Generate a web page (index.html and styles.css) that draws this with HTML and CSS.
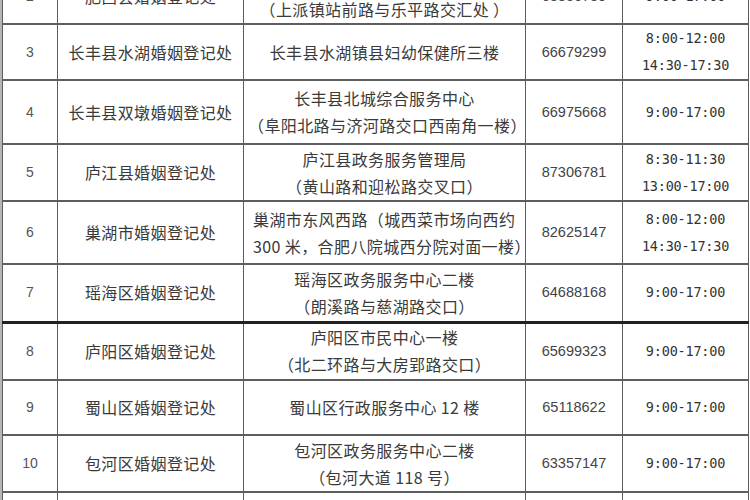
FILE: index.html
```html
<!DOCTYPE html>
<html lang="zh-CN">
<head>
<meta charset="utf-8">
<title>合肥市婚姻登记处</title>
<link rel="stylesheet" href="styles.css">
</head>
<body>
<div class="sheet">
<table class="reg">
  <colgroup>
    <col class="c-no"><col class="c-name"><col class="c-addr"><col class="c-tel"><col class="c-time">
  </colgroup>
  <tbody>
    <tr class="r2">
      <td class="no">2</td>
      <td class="name">肥西县婚姻登记处</td>
      <td class="addr">肥西县政务服务中心<br>（上派镇站前路与乐平路交汇处 ）</td>
      <td class="tel">68856789</td>
      <td class="time">9:00-17:00</td>
    </tr>
    <tr class="r3">
      <td class="no">3</td>
      <td class="name">长丰县水湖婚姻登记处</td>
      <td class="addr">长丰县水湖镇县妇幼保健所三楼</td>
      <td class="tel">66679299</td>
      <td class="time">8:00-12:00<br>14:30-17:30</td>
    </tr>
    <tr class="r4">
      <td class="no">4</td>
      <td class="name">长丰县双墩婚姻登记处</td>
      <td class="addr">长丰县北城综合服务中心<br>（阜阳北路与济河路交口西南角一楼）</td>
      <td class="tel">66975668</td>
      <td class="time">9:00-17:00</td>
    </tr>
    <tr class="r5">
      <td class="no">5</td>
      <td class="name">庐江县婚姻登记处</td>
      <td class="addr">庐江县政务服务管理局<br>（黄山路和迎松路交叉口）</td>
      <td class="tel">87306781</td>
      <td class="time">8:30-11:30<br>13:00-17:00</td>
    </tr>
    <tr class="r6">
      <td class="no">6</td>
      <td class="name">巢湖市婚姻登记处</td>
      <td class="addr left">巢湖市东风西路（城西菜市场向西约<br>300 米，合肥八院城西分院对面一楼）</td>
      <td class="tel">82625147</td>
      <td class="time">8:00-12:00<br>14:30-17:30</td>
    </tr>
    <tr class="r7">
      <td class="no">7</td>
      <td class="name">瑶海区婚姻登记处</td>
      <td class="addr">瑶海区政务服务中心二楼<br>（朗溪路与慈湖路交口）</td>
      <td class="tel">64688168</td>
      <td class="time">9:00-17:00</td>
    </tr>
    <tr class="r8">
      <td class="no">8</td>
      <td class="name">庐阳区婚姻登记处</td>
      <td class="addr">庐阳区市民中心一楼<br>（北二环路与大房郢路交口）</td>
      <td class="tel">65699323</td>
      <td class="time">9:00-17:00</td>
    </tr>
    <tr class="r9">
      <td class="no">9</td>
      <td class="name">蜀山区婚姻登记处</td>
      <td class="addr">蜀山区行政服务中心 12 楼</td>
      <td class="tel">65118622</td>
      <td class="time">9:00-17:00</td>
    </tr>
    <tr class="r10">
      <td class="no">10</td>
      <td class="name">包河区婚姻登记处</td>
      <td class="addr">包河区政务服务中心二楼<br>（包河大道 118 号）</td>
      <td class="tel">63357147</td>
      <td class="time">9:00-17:00</td>
    </tr>
    <tr class="r11">
      <td></td><td></td><td></td><td></td><td></td>
    </tr>
  </tbody>
</table>
</div>
</body>
</html>
```

FILE: styles.css
```css
html, body {
  margin: 0;
  padding: 0;
  background: #ffffff;
  overflow: hidden;
}

.sheet {
  width: 750px;
  height: 500px;
  overflow: hidden;
  border-left: 2px solid #b5b5b5;
  box-sizing: border-box;
}

.reg {
  border-collapse: collapse;
  table-layout: fixed;
  width: 746px;
  margin-top: -33px;
  color: #3a3a3a;
  font-family: "Noto Sans CJK SC", "Noto Sans", sans-serif;
  font-size: 16px;
  letter-spacing: 0.4px;
}

.c-no { width: 55px; }
.c-name { width: 186px; }
.c-addr { width: 282px; }
.c-tel { width: 97px; }
.c-time { width: 126px; }

.reg td {
  border: 2px solid #5e5e5e;
  border-left-width: 1.5px;
  border-right-width: 1.5px;
  text-align: center;
  vertical-align: middle;
  padding: 0 4px;
  line-height: 27px;
  white-space: nowrap;
}

.reg td.addr.left {
  text-align: left;
  padding-left: 9px;
}

.no {
  font-family: "Liberation Sans", Arial, sans-serif;
  font-size: 14px;
  color: #555;
  letter-spacing: 0;
}

.tel {
  font-family: "Liberation Sans", Arial, sans-serif;
  font-size: 14.5px;
  letter-spacing: 0;
  color: #444;
}

.time {
  font-family: "DejaVu Sans Mono", "Liberation Mono", monospace;
  font-size: 13.5px;
  letter-spacing: -0.2px;
  color: #333;
}

.r2 { height: 52px; }
.r3 { height: 56px; }
.r4 { height: 64px; }
.r5 { height: 57px; }
.r6 { height: 63px; }
.r7 { height: 58px; }
.r8 { height: 58px; }
.r9 { height: 55px; }
.r10 { height: 57px; }
.r11 { height: 40px; }

.r7 td { border-bottom: 3px solid #222; }
```
